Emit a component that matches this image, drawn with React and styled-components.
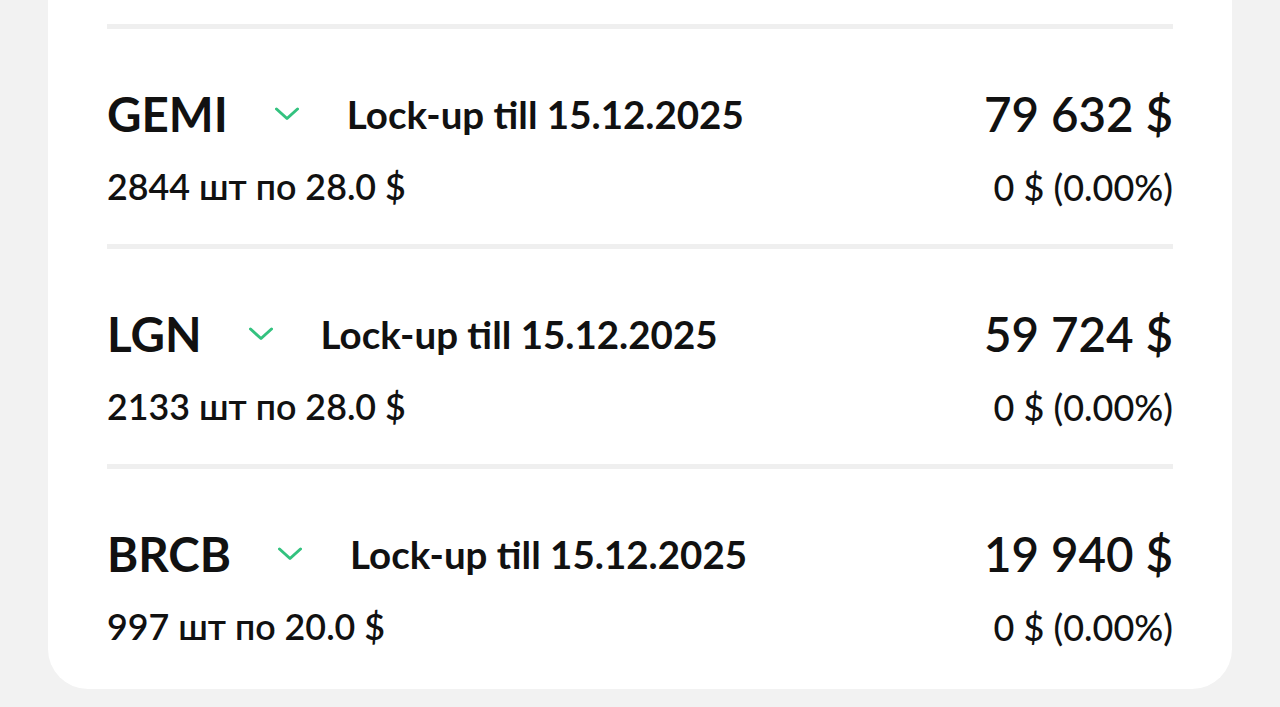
import React from "react";
import styled, { createGlobalStyle } from "styled-components";

const GlobalStyle = createGlobalStyle`
    html, body {
        margin: 0;
        padding: 0;
        background: #f2f2f2;
        font-family: Lato, "Noto Sans", sans-serif;
        color: #111111;
    }
`;

const Page = styled.div`
    width: 1280px;
    height: 707px;
    overflow: hidden;
    background: #f2f2f2;
    padding: 0 48px;
    box-sizing: border-box;
`;

const Card = styled.div`
    background: #ffffff;
    border-radius: 0 0 40px 40px;
    padding: 24px 59px 5px;
`;

const Item = styled.div`
    border-top: 5px solid #efefef;
    padding: 56px 0 36px;
    display: flex;
    flex-direction: column;
    gap: 23px;
`;

const Row = styled.div`
    display: flex;
    flex-direction: row;
    align-items: center;
    justify-content: space-between;
`;

const Left = styled.div`
    display: flex;
    flex-direction: row;
    align-items: center;
`;

const Ticker = styled.span`
    font-size: 47.5px;
    line-height: 58px;
    font-weight: 700;
`;

const Chevron = styled.svg`
    width: 24px;
    height: 14px;
    margin: 0 48px 0 47px;
    flex-shrink: 0;
`;

const LockUp = styled.span`
    font-size: 38.5px;
    line-height: 46px;
    font-weight: 700;
`;

const Amount = styled.span`
    font-size: 47.5px;
    line-height: 58px;
    font-weight: 600;
`;

const Sub = styled.span`
    font-size: ${(p) => (p.$light ? "36px" : "35.8px")};
    line-height: 42px;
    font-weight: ${(p) => (p.$light ? 500 : 600)};
`;

const items = [
    { ticker: "GEMI", amount: "79 632 $", qty: "2844 шт по 28.0 $" },
    { ticker: "LGN", amount: "59 724 $", qty: "2133 шт по 28.0 $" },
    { ticker: "BRCB", amount: "19 940 $", qty: "997 шт по 20.0 $" },
];

const ChevronIcon = () => (
    <Chevron viewBox="0 0 24 14" fill="none">
        <path
            d="M1.5 2 L12 11.5 L22.5 2"
            stroke="#33c27f"
            strokeWidth="3"
            strokeLinecap="round"
            strokeLinejoin="round"
        />
    </Chevron>
);

const Position = ({ ticker, amount, qty }) => (
    <Item>
        <Row>
            <Left>
                <Ticker>{ticker}</Ticker>
                <ChevronIcon />
                <LockUp>{"Lock-up till 15.12.2025"}</LockUp>
            </Left>
            <Amount>{amount}</Amount>
        </Row>
        <Row>
            <Sub>{qty}</Sub>
            <Sub $light>{"0 $ (0.00%)"}</Sub>
        </Row>
    </Item>
);

const App = () => (
    <Page>
        <GlobalStyle />
        <Card>
            {items.map((item) => (
                <Position key={item.ticker} {...item} />
            ))}
        </Card>
    </Page>
);

export default App;
